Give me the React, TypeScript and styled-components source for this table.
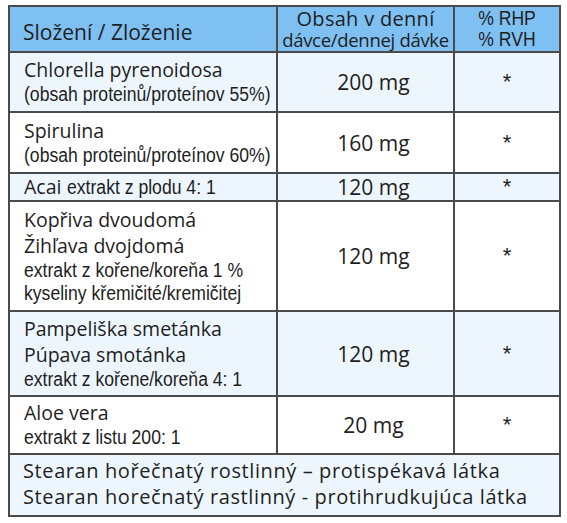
import styled, { createGlobalStyle } from 'styled-components';

const GlobalStyle = createGlobalStyle`
    body {
        margin: 0;
        background: #ffffff;
    }
`

const BORDER = '#4a4a4a';
const HEAD_BG = '#7ec0f1';
const LIGHT_BG = '#eef6fd';
const MAIN_FONT = '"Open Sans", "Liberation Sans", Arial, sans-serif';
const NARROW_FONT = '"Liberation Sans", Arial, sans-serif';

const Page = styled.div`
    padding: 5px 8px 0 8px;
    font-family: ${MAIN_FONT};
    color: #1e1e1e;
`

const Table = styled.table`
    border-collapse: collapse;
    width: 551px;
    table-layout: fixed;
    border: 2px solid ${BORDER};
`

const HeadCell = styled.th<{ align?: string }>`
    background: ${HEAD_BG};
    border: 2px solid ${BORDER};
    font-weight: normal;
    font-size: 21px;
    line-height: 20px;
    white-space: nowrap;
    text-align: ${props => props.align || 'center'};
    padding: ${props => props.align === 'left' ? '6px 0 0 13px' : '1px 0'};
    vertical-align: middle;
    overflow: hidden;
`

const HeadLine = styled.div<{ spacing: number; size: number }>`
    font-size: ${props => props.size}px;
    letter-spacing: ${props => props.spacing}px;
    line-height: 21px;
    height: 21px;
`

// condensed look, taken from a regular face squeezed sideways
const Narrow = styled.span`
    display: inline-block;
    font-family: ${NARROW_FONT};
    font-size: 20px;
    transform: scaleX(0.88);
    transform-origin: left center;
    white-space: nowrap;
`

const NarrowHead = styled.div`
    font-family: ${NARROW_FONT};
    font-size: 20px;
    line-height: 21px;
    height: 21px;
    transform: scaleX(0.88);
`

const Row = styled.tr<{ light?: boolean; h: number }>`
    background: ${props => props.light ? LIGHT_BG : '#ffffff'};
    height: ${props => props.h}px;
`

const NameCell = styled.td<{ compact?: boolean }>`
    border: 2px solid ${BORDER};
    padding: ${props => props.compact ? '0 0 0 14px' : '2px 0 3px 14px'};
    vertical-align: middle;
`

const Main = styled.div<{ compact?: boolean }>`
    font-size: 19.5px;
    line-height: ${props => props.compact ? '24px' : '26px'};
    white-space: nowrap;
`

const Sub = styled.div`
    line-height: 22px;
`

const AmountCell = styled.td`
    border: 2px solid ${BORDER};
    text-align: center;
    padding: 0 0 0 16px;
    font-size: 21px;
    line-height: 24px;
    vertical-align: middle;
`

const StarCell = styled.td`
    border: 2px solid ${BORDER};
    text-align: center;
    font-family: ${NARROW_FONT};
    font-size: 22px;
    line-height: 24px;
    padding: 0;
    vertical-align: middle;
`

const FooterCell = styled.td`
    border: 2px solid ${BORDER};
    background: ${LIGHT_BG};
    padding: 3px 0 5px 13px;
    font-size: 20px;
    letter-spacing: 0.6px;
    line-height: 26px;
    white-space: nowrap;
`

type Item = {
    main: string[];
    sub: string[];
    amount: string;
    h: number;
    inline?: string;
};

const items: Item[] = [
    { main: ['Chlorella pyrenoidosa'], sub: ['(obsah proteinů/proteínov 55%)'], amount: '200 mg', h: 60 },
    { main: ['Spirulina'], sub: ['(obsah proteinů/proteínov 60%)'], amount: '160 mg', h: 61 },
    { main: ['Acai'], sub: [], inline: 'extrakt z plodu 4: 1', amount: '120 mg', h: 28 },
    {
        main: ['Kopřiva dvoudomá', 'Žihľava dvojdomá'],
        sub: ['extrakt z kořene/koreňa 1 %', 'kyseliny křemičité/kremičitej'],
        amount: '120 mg',
        h: 110,
    },
    {
        main: ['Pampeliška smetánka', 'Púpava smotánka'],
        sub: ['extrakt z kořene/koreňa 4: 1'],
        amount: '120 mg',
        h: 85,
    },
    { main: ['Aloe vera'], sub: ['extrakt z listu 200: 1'], amount: '20 mg', h: 58 },
];

const App = () => {
    return (
        <Page>
            <GlobalStyle />
            <Table>
                <colgroup>
                    <col style={{ width: 268 }} />
                    <col style={{ width: 177 }} />
                    <col style={{ width: 106 }} />
                </colgroup>
                <thead>
                    <tr>
                        <HeadCell align="left">Složení / Zloženie</HeadCell>
                        <HeadCell>
                            <HeadLine size={20} spacing={0.3}>Obsah v denní</HeadLine>
                            <HeadLine size={18.5} spacing={-0.3}>dávce/dennej dávke</HeadLine>
                        </HeadCell>
                        <HeadCell>
                            <NarrowHead>% RHP</NarrowHead>
                            <NarrowHead>% RVH</NarrowHead>
                        </HeadCell>
                    </tr>
                </thead>
                <tbody>
                    {items.map((item, i) => (
                        <Row key={i} light={i % 2 === 0} h={item.h}>
                            <NameCell compact={!!item.inline}>
                                {item.inline ? (
                                    <Main compact>
                                        {item.main[0]} <Narrow>{item.inline}</Narrow>
                                    </Main>
                                ) : (
                                    <>
                                        {item.main.map(line => <Main key={line}>{line}</Main>)}
                                        {item.sub.map(line => (
                                            <Sub key={line}><Narrow>{line}</Narrow></Sub>
                                        ))}
                                    </>
                                )}
                            </NameCell>
                            <AmountCell>{item.amount}</AmountCell>
                            <StarCell>*</StarCell>
                        </Row>
                    ))}
                    <tr>
                        <FooterCell colSpan={3}>
                            Stearan hořečnatý rostlinný – protispékavá látka<br />
                            Stearan horečnatý rastlinný - protihrudkujúca látka
                        </FooterCell>
                    </tr>
                </tbody>
            </Table>
        </Page>
    )
}

export default App;
